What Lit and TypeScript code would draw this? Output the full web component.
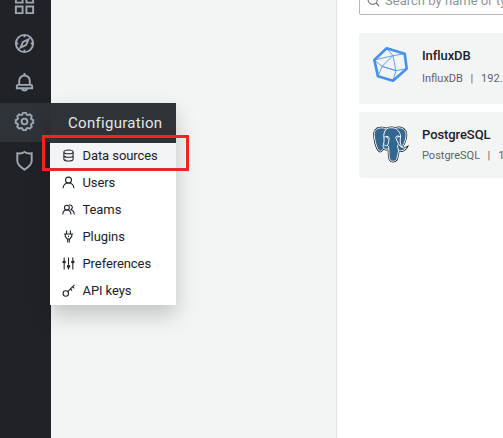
import { LitElement, html, css, svg } from "lit";
import { customElement } from "lit/decorators.js";
import { classMap } from "lit/directives/class-map.js";

const icons = {
  apps: svg`<path d="M3 3h7v7H3zM14 3h7v7h-7zM3 14h7v7H3zM14 14h7v7h-7z"/>`,
  compass: svg`<circle cx="12" cy="12" r="9"/><path d="M16.2 7.8l-2.6 5.8-5.8 2.6 2.6-5.8zM12 3v2.500M12 18.500V21M3 12h2.500M18.500 12H21"/>`,
  bell: svg`<path d="M12 2v2.500M6.500 14.500V10.200a5.500 5.500 0 0 1 11 0v4.300M5.300 14.500h13.400a1.300 1.300 0 0 1 1.300 1.300v2.200H4v-2.200a1.300 1.300 0 0 1 1.300-1.300zM9.200 18.300a2.900 2.900 0 0 0 5.600 0"/>`,
  cog: svg`<circle cx="12" cy="12" r="3"/><path d="M10.500 3h3l.9 1.900 1.200.4 2-.7 1.900 1.900-.7 2 .5 1.100 1.800.9v3l-1.800.9-.5 1.100.7 2-1.900 1.900-2-.7-1.200.4-.9 1.900h-3l-.9-1.900-1.200-.4-2 .7-1.900-1.900.7-2-.5-1.100-1.800-.9v-3l1.800-.9.5-1.100-.7-2 1.900-1.900 2 .7 1.200-.4z"/>`,
  shield: svg`<path d="M12 3C10 4.600 7.500 5 4.500 4.500V12.500C4.500 16 8 18.900 12 21.500C16 18.900 19.500 16 19.500 12.500V4.500C16.500 5 14 4.600 12 3z"/>`,
  database: svg`<path d="M3.500 5.500c0-5 17-5 17 0v13c0 5-17 5-17 0zM3.500 5.500c0 4.500 17 4.500 17 0M3.500 12c0 4.500 17 4.500 17 0M3.500 9.500v2.500M20.500 9.500v2.500M6.500 13v1M6.500 19v1"/>`,
  user: svg`<circle cx="12" cy="7.500" r="5.500"/><path d="M2 22.500c.5-5.800 4.500-9.500 10-9.500s9.500 3.700 10 9.500"/>`,
  users: svg`<circle cx="9" cy="8.500" r="4.500"/><path d="M1.500 21c0-5 3-8 7.500-8s7.500 3 7.500 8M13 3.800c4-.8 6.500 1.700 6 4.700-.2 1.700-1 3-2.500 4 3.500 1 6 4.500 6 8.500"/>`,
  plug: svg`<path d="M8.500 1v6M15.500 1v6M3.500 7.500h17M6 7.500V12l3.500 4.500h5L18 12V7.500M10.500 16.500V23M13.500 16.500V23M12 10.500v2.500"/>`,
  sliders: svg`<path d="M4 1v6M4 11v12M1 9.500h6M12 1v13M12 19v4M9 18h6M20 1v6M20 11v12M17 9.500h6"/><circle cx="4" cy="9" r="1.700"/><circle cx="12" cy="17" r="2"/><circle cx="20" cy="9" r="1.700"/>`,
  key: svg`<circle cx="7" cy="17.500" r="5"/><path d="M10.600 13.900L23 1.500M15.500 9l3 3M19.500 5l3 3"/>`,
  search: svg`<circle cx="10.500" cy="10.500" r="8.500"/><path d="M16.500 16.500l6 6"/>`,
};

const influx = svg`
  <path class="rim" d="M41 4L95 20L101 65L60 101L15 88L4 39Z"/>
  <path class="edge" d="M41 4L60 26L95 20M60 26L27 58L4 39L60 26L69 71L27 58L15 88M27 58L69 71L101 65M69 71L60 101"/>`;

const outline =
  "M21 3C7 4 0 13 2 27C4 44 10 67 18 73C22 76 26 69 31 64C35 69 42 68 47 66C48 77 47 91 51 99C54 106 68 105 72 98C75 90 75 80 78 72C87 74 98 70 102 63C98 65 92 63 88 61C98 48 105 25 99 13C92 1 76 1 68 4C58 1 48 1 40 6C34 3 27 2 21 3Z";

const elephant = svg`
  <g transform="translate(2 3) scale(.96 .99)">
    <path class="halo" d=${outline}/>
    <path class="skin" d=${outline}/>
    <path class="line" d="M40 6C32 14 31 22 32 33C34 43 31 51 29 58L33 64M33 31C39 27 45 28 48 32C48 44 46 50 43 56C39 58 35 56 31 53M43 56C47 58 48 62 47 66M68 4C78 11 85 20 84 31C82 42 82 51 88 61M84 30C77 26 71 27 69 31C72 37 73 45 77 50C80 54 81 59 88 61M77 53C72 58 76 63 78 72"/>
    <path class="line" d="M40 32l5 2M74 31l5-1"/>
  </g>`;

@customElement("app-root")
export class AppRoot extends LitElement {
  static styles = css`
    :host {
      display: grid;
      grid-template-columns: 51px 285px 1fr;
      position: relative;
      width: 503px;
      height: 438px;
      overflow: hidden;
      background: #f3f5f4;
      font-family: Roboto, sans-serif;
      color: #1e2028;
    }
    * { box-sizing: border-box; }
    svg { display: block; flex: none; fill: none; stroke: currentColor; stroke-width: 2; }
    .sidebar {
      background: #202226;
      color: #9fa7b3;
      overflow: hidden;
    }
    .nav { margin-top: -14px; }
    .entry {
      display: flow-root;
      height: 39px;
      padding: 7.500px 0 0 13px;
    }
    .entry svg { width: 23px; height: 23px; margin: -0.5px; }
    .entry.active { background: #2d3337; }
    .menu {
      position: absolute;
      left: 50px;
      top: 103px;
      width: 126px;
      background: #fff;
      box-shadow: 0 10px 20px rgba(0, 0, 0, 0.2);
    }
    .title {
      height: 40px;
      padding-left: 18px;
      background: #2d3337;
      color: #e3e7ea;
      font-size: 15px;
      line-height: 40px;
      letter-spacing: 0.3px;
      white-space: nowrap;
    }
    .link {
      display: flex;
      align-items: center;
      gap: 8px;
      height: 27px;
      padding: 0 0 2px 11.500px;
      font-size: 13px;
      letter-spacing: -0.08px;
      line-height: 15px;
      white-space: nowrap;
    }
    .link span { margin-top: -1px; }
    .link.current { background: #f3f4f5; }
    .link svg { width: 13px; height: 13px; }
    .frame {
      position: absolute;
      left: 42px;
      top: 135px;
      width: 147px;
      height: 36px;
      border: 3px solid #ee2428;
    }
    .content {
      grid-column: 3;
      border-left: 1px solid #e1e3e5;
      padding-left: 22px;
      background: #fff;
      overflow: hidden;
    }
    .search {
      display: flex;
      align-items: center;
      gap: 5px;
      width: 260px;
      height: 32px;
      margin-top: -17px;
      padding: 3px 0 0 7px;
      border: 1px solid #b5b8bd;
      border-radius: 2px;
      color: #8e949d;
      font-size: 13px;
      letter-spacing: 0.02px;
      white-space: nowrap;
    }
    .search svg { width: 13px; height: 13px; color: #62666c; }
    .card {
      display: flex;
      gap: 14px;
      width: 260px;
      height: 71px;
      margin-top: 18px;
      padding: 14px 0 0 14px;
      background: #f3f5f4;
      border-radius: 3px;
      white-space: nowrap;
    }
    .card + .card { height: 66px; margin-top: 8px; }
    .logo { width: 35px; height: 36px; overflow: visible; }
    .name {
      font-size: 13px;
      font-weight: 500;
      line-height: 18px;
      letter-spacing: -0.08px;
    }
    .meta {
      display: flex;
      gap: 8px;
      margin-top: 7px;
      color: #5d626b;
      font-size: 11px;
      line-height: 14px;
    }
    .meta span:nth-child(2) { margin-left: -0.5px; }
    .card + .card .meta { margin-top: 5px; }
    .rim { stroke: #4591ed; stroke-width: 8; stroke-linejoin: round; }
    .edge { stroke: #4591ed; stroke-width: 2.500; }
    .halo { stroke: #111; stroke-width: 7; }
    .skin { fill: #336791; stroke: #fff; stroke-width: 3; }
    .line { stroke: #fff; stroke-width: 3; }
  `;

  private entries = ["apps", "compass", "bell", "cog", "shield"] as const;
  private links = [
    ["database", "Data sources"],
    ["user", "Users"],
    ["users", "Teams"],
    ["plug", "Plugins"],
    ["sliders", "Preferences"],
    ["key", "API keys"],
  ] as const;

  private icon(name: keyof typeof icons) {
    return html`<svg viewBox="0 0 24 24">${icons[name]}</svg>`;
  }

  private card(name: string, address: string, logo: unknown) {
    return html`<article class="card">
      <svg class="logo" viewBox="0 0 105 108">${logo}</svg>
      <div>
        <div class="name">${name}</div>
        <div class="meta"><span>${name}</span><span>|</span><span>${address}</span></div>
      </div>
    </article>`;
  }

  render() {
    return html`
      <aside class="sidebar">
        <nav class="nav">
          ${this.entries.map((e) => html`<div class=${classMap({ entry: true, active: e === "cog" })}>${this.icon(e)}</div>`)}
        </nav>
      </aside>
      <main class="content">
        <div class="search">${this.icon("search")}<span>Search by name or type</span></div>
        ${this.card("InfluxDB", "192.168", influx)}
        ${this.card("PostgreSQL", "192.168", elephant)}
      </main>
      <div class="menu">
        <div class="title">Configuration</div>
        ${this.links.map(([i, label], n) => html`<div class=${classMap({ link: true, current: n === 0 })}>${this.icon(i)}<span>${label}</span></div>`)}
      </div>
      <div class="frame"></div>
    `;
  }
}
